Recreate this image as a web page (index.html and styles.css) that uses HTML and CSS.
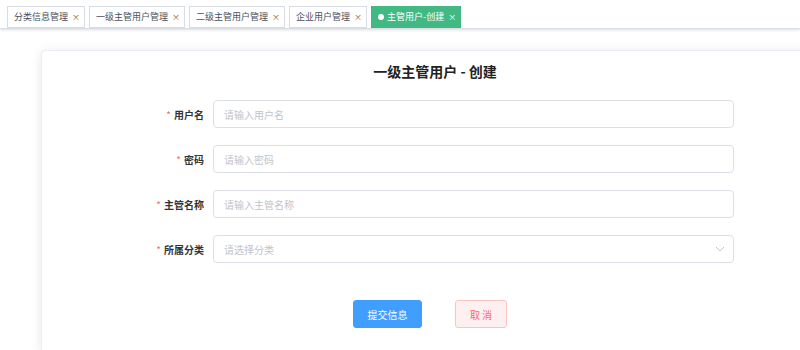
FILE: index.html
```html
<!DOCTYPE html>
<html lang="zh-CN">
<head>
<meta charset="utf-8">
<title>一级主管用户 - 创建</title>
<link rel="stylesheet" href="styles.css">
</head>
<body>
<div class="tags-view">
  <span class="tag">分类信息管理<i class="close">×</i></span>
  <span class="tag">一级主管用户管理<i class="close">×</i></span>
  <span class="tag">二级主管用户管理<i class="close">×</i></span>
  <span class="tag">企业用户管理<i class="close">×</i></span>
  <span class="tag active"><b class="dot"></b>主管用户-创建<i class="close">×</i></span>
</div>
<div class="main">
  <div class="card">
    <h1 class="title">一级主管用户 - 创建</h1>
    <form class="form">
      <label class="label"><span class="req">*</span>用户名</label>
      <div class="input"><span class="ph">请输入用户名</span></div>
      <label class="label"><span class="req">*</span>密码</label>
      <div class="input"><span class="ph">请输入密码</span></div>
      <label class="label"><span class="req">*</span>主管名称</label>
      <div class="input"><span class="ph">请输入主管名称</span></div>
      <label class="label"><span class="req">*</span>所属分类</label>
      <div class="input select"><span class="ph">请选择分类</span>
        <svg class="arrow" width="10" height="6" viewBox="0 0 10 6"><path d="M1 1 L5 5 L9 1" fill="none" stroke="#c0c4cc" stroke-width="1"/></svg>
      </div>
    </form>
    <div class="actions">
      <button class="btn primary" type="button">提交信息</button>
      <button class="btn danger" type="button">取&nbsp;消</button>
    </div>
  </div>
</div>
</body>
</html>
```
FILE: styles.css
```css
html, body {
  margin: 0;
  padding: 0;
  background: #fff;
  overflow: hidden;
  font-family: "Noto Sans CJK SC", "Noto Sans", sans-serif;
}
.tags-view {
  height: 29px;
  box-sizing: border-box;
  padding: 6px 0 0 7px;
  display: flex;
  gap: 4px;
  background: #fff;
  border-bottom: 1px solid #d8dce5;
  box-shadow: 0 1px 3px 0 rgba(0,0,0,.12), 0 0 3px 0 rgba(0,0,0,.04);
  position: relative;
  z-index: 1;
}
.tag {
  height: 22px;
  box-sizing: border-box;
  border: 1px solid #d8dce5;
  background: #fff;
  color: #495060;
  font-size: 9px;
  line-height: 20px;
  padding: 0 4px 0 6px;
  display: flex;
  align-items: center;
  white-space: nowrap;
}
.tag .close {
  font-style: normal;
  font-size: 8px;
  margin-left: 4px;
  color: #666;
}
.tag.active {
  background: #42b983;
  border-color: #42b983;
  color: #fff;
}
.tag.active .close { color: #fff; }
.dot {
  width: 6px;
  height: 6px;
  border-radius: 50%;
  background: #fff;
  margin-right: 3px;
}
.main {
  padding: 21px 0 0 41px;
}
.card {
  width: 788px;
  height: 300px;
  box-sizing: border-box;
  border: 1px solid #ebeef5;
  border-bottom: none;
  border-radius: 4px 4px 0 0;
  background: #fff;
  box-shadow: 0 2px 12px 0 rgba(0,0,0,.1);
}
.title {
  margin: 0;
  padding-top: 10px;
  text-align: center;
  font-size: 14px;
  line-height: 20px;
  font-weight: bold;
  color: #222;
}
.form {
  margin-top: 19px;
  display: grid;
  grid-template-columns: 171px 521px;
  row-gap: 17px;
  align-items: center;
}
.label {
  text-align: right;
  padding-right: 9px;
  font-size: 10px;
  font-weight: bold;
  color: #333;
}
.req {
  color: #f56c6c;
  margin-right: 3px;
  font-weight: normal;
}
.input {
  height: 28px;
  box-sizing: border-box;
  border: 1px solid #dcdfe6;
  border-radius: 4px;
  padding-left: 10px;
  display: flex;
  align-items: center;
  justify-content: space-between;
}
.ph {
  font-size: 10px;
  color: #c0c4cc;
}
.arrow {
  margin-right: 8px;
}
.actions {
  margin-top: 37px;
  padding-left: 311px;
  display: flex;
  gap: 33px;
}
.btn {
  height: 28px;
  border-radius: 3px;
  font-family: inherit;
  font-size: 10px;
  padding: 0;
  cursor: pointer;
}
.btn.primary {
  width: 69px;
  background: #409eff;
  border: 1px solid #409eff;
  color: #fff;
}
.btn.danger {
  width: 52px;
  background: #fef0f0;
  border: 1px solid #fbc4c4;
  color: #f56c6c;
}
```
